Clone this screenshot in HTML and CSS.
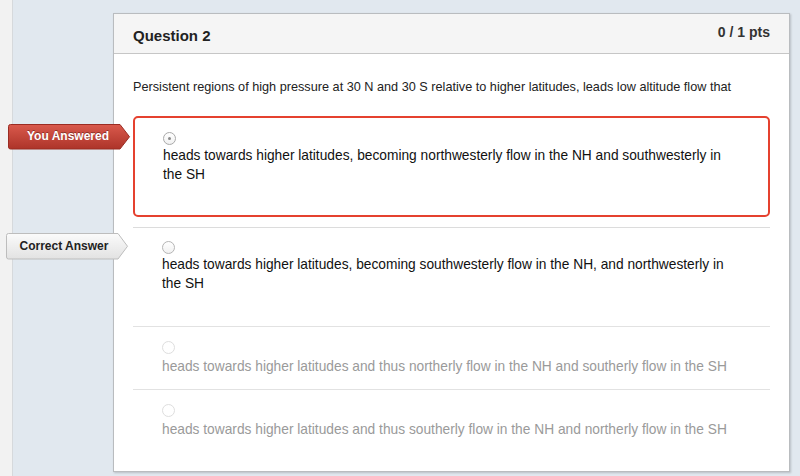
FILE: index.html
```html
<!DOCTYPE html>
<html>
<head>
<meta charset="utf-8">
<link rel="stylesheet" href="styles.css">
</head>
<body>
<div class="page">
  <div class="strip"></div>
  <div class="main">
    <div class="card">
      <div class="card-header">
        <div class="title">Question 2</div>
        <div class="pts">0 / 1 pts</div>
      </div>
      <div class="card-body">
        <p class="question">Persistent regions of high pressure at 30 N and 30 S relative to higher latitudes, leads low altitude flow that</p>
        <div class="answers">
          <div class="answer-row wrong">
            <div class="tag tag-wrong">
              <svg class="tag-shape" width="124" height="26" viewBox="0 0 124 26">
                <defs>
                  <linearGradient id="gr" x1="0" y1="0" x2="0" y2="1">
                    <stop offset="0" stop-color="#d9594c"/>
                    <stop offset="1" stop-color="#ad3429"/>
                  </linearGradient>
                </defs>
                <path d="M2.5,0.5 H112 L121.5,12.75 L112,25 H2.5 Q0.5,25 0.5,23 V2.5 Q0.5,0.5 2.5,0.5 Z" fill="url(#gr)" stroke="#9a2c23" stroke-width="1"/>
              </svg>
              <span class="tag-text">You Answered</span>
            </div>
            <div class="answer-box selected">
              <span class="radio checked"></span>
              <div class="answer-text">heads towards higher latitudes, becoming northwesterly flow in the NH and southwesterly in the SH</div>
            </div>
          </div>
          <div class="answer-row">
            <div class="tag tag-correct">
              <svg class="tag-shape" width="124" height="27" viewBox="0 0 124 27">
                <defs>
                  <linearGradient id="gg" x1="0" y1="0" x2="0" y2="1">
                    <stop offset="0" stop-color="#fbfbfb"/>
                    <stop offset="1" stop-color="#e2e2e2"/>
                  </linearGradient>
                </defs>
                <path d="M2.5,0.5 H112 L121.5,13.25 L112,26 H2.5 Q0.5,26 0.5,24 V2.5 Q0.5,0.5 2.5,0.5 Z" fill="url(#gg)" stroke="#bdbdbd" stroke-width="1"/>
              </svg>
              <span class="tag-text">Correct Answer</span>
            </div>
            <div class="answer-box">
              <span class="radio"></span>
              <div class="answer-text">heads towards higher latitudes, becoming southwesterly flow in the NH, and northwesterly in the SH</div>
            </div>
          </div>
          <div class="answer-row short">
            <div class="answer-box">
              <span class="radio disabled"></span>
              <div class="answer-text muted">heads towards higher latitudes and thus northerly flow in the NH and southerly flow in the SH</div>
            </div>
          </div>
          <div class="answer-row short last">
            <div class="answer-box">
              <span class="radio disabled"></span>
              <div class="answer-text muted">heads towards higher latitudes and thus southerly flow in the NH and northerly flow in the SH</div>
            </div>
          </div>
        </div>
      </div>
    </div>
  </div>
</div>
</body>
</html>
```
FILE: styles.css
```css
html, body {
  margin: 0;
  padding: 0;
  height: 100%;
}
body {
  font-family: "Liberation Sans", Arial, Helvetica, sans-serif;
  color: #222;
  background: #e1e8ef;
  overflow: hidden;
}
.page {
  display: flex;
  min-height: 476px;
}
.strip {
  width: 12px;
  background: #f2f2f2;
  border-right: 1px solid #d6d9dc;
  flex: none;
}
.main {
  flex: 1;
  background: #e1e8ef;
  padding: 13px 10px 0 100px;
}
.card {
  background: #fff;
  border: 1px solid #b9bcbf;
  box-shadow: 1px 1px 2px rgba(0, 0, 0, 0.18);
}
.card-header {
  display: flex;
  justify-content: space-between;
  align-items: flex-start;
  background: #f5f5f5;
  border-bottom: 1px solid #c6c6c6;
  height: 39px;
  padding: 0 19px;
}
.title {
  font-size: 15px;
  font-weight: bold;
  color: #222;
  margin-top: 13px;
}
.pts {
  font-size: 14px;
  font-weight: bold;
  color: #333;
  margin-top: 10px;
}
.card-body {
  padding: 24px 19px 19px 19px;
}
.question {
  margin: 0 0 20px 0;
  font-size: 12.7px;
  line-height: 18px;
  color: #222;
}
.answer-row {
  position: relative;
  border-bottom: 1px solid #e2e2e2;
}
.answer-row.wrong {
  padding-bottom: 10px;
  border-bottom-color: #dcdcdc;
}
.answer-row.last {
  border-bottom: none;
}
.answer-box {
  padding: 13px 29px 33px 29px;
}
.answer-box.selected {
  border: 2px solid #e5412f;
  border-radius: 5px;
  padding: 14px 27px 31px 28px;
}
.answer-row.short .answer-box {
  padding: 14px 29px 13px 29px;
}
.radio {
  display: block;
  width: 11px;
  height: 11px;
  border: 1px solid #b5b5b5;
  border-radius: 50%;
  background: linear-gradient(#ffffff, #f1f1f1);
  position: relative;
  margin-bottom: 1px;
}
.radio.checked {
  border-color: #a9a9a9;
}
.radio.checked::after {
  content: "";
  position: absolute;
  left: 4px;
  top: 4px;
  width: 3px;
  height: 3px;
  border-radius: 50%;
  background: #8a8a8a;
}
.radio.disabled {
  border-color: #dedede;
  background: #fff;
}
.answer-text {
  font-size: 13.75px;
  line-height: 19px;
  color: #111;
}
.answer-text.muted {
  color: #9a9a9a;
}
.answer-row.short .answer-text {
  margin-top: 3px;
}
.tag {
  position: absolute;
  height: 26px;
  width: 124px;
}
.tag-wrong {
  left: -125px;
  top: 8px;
}
.tag-correct {
  left: -127px;
  top: 5px;
}
.tag-shape {
  position: absolute;
  left: 0;
  top: 0;
}
.tag-text {
  position: absolute;
  left: 0;
  top: 0;
  width: 114px;
  text-align: center;
  font-size: 12px;
  font-weight: bold;
  line-height: 25px;
}
.tag-wrong .tag-text {
  color: #fff;
  text-shadow: 0 -1px 0 rgba(0, 0, 0, 0.35);
  left: 3px;
}
.tag-correct .tag-text {
  color: #222;
  line-height: 26px;
  left: 1px;
}
```
